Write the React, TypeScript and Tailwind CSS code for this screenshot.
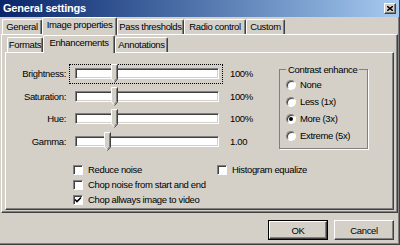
import { useState } from "react";

type SliderRow = {
  label: string;
  pos: number;
  text: string;
  focused?: boolean;
  height: string;
};

const sliders: SliderRow[] = [
  { label: "Brightness:", pos: 35, text: "100%", focused: true, height: "h-[23px]" },
  { label: "Saturation:", pos: 35, text: "100%", height: "h-[22px]" },
  { label: "Hue:", pos: 35, text: "100%", height: "h-[23px]" },
  { label: "Gamma:", pos: 28, text: "1.00", height: "h-[23px]" },
];

const outerTabs = [
  { name: "General", w: "w-[40px]" },
  { name: "Image properties", w: "w-[75px]", active: true },
  { name: "Pass thresholds", w: "w-[67px]" },
  { name: "Radio control", w: "w-[62px]" },
  { name: "Custom", w: "w-[39px]" },
];

const innerTabs = [
  { name: "Formats", w: "w-[36px]" },
  { name: "Enhancements", w: "w-[72px]", active: true },
  { name: "Annotations", w: "w-[53px]" },
];

const contrastModes = ["None", "Less (1x)", "More (3x)", "Extreme (5x)"];

const Tab = ({ name, w, active }: { name: string; w: string; active?: boolean }) => (
  <div
    className={
      active
        ? `${w} relative z-10 -mb-px h-[18px] bg-[#d4d0c8] border-t border-l border-r border-t-white border-l-white border-r-[#404040] shadow-[inset_-1px_0_#808080] rounded-t-[2px] flex items-start justify-center pt-[1px]`
        : `${w} h-[15px] border-t border-l border-r border-t-white border-l-white border-r-[#404040] shadow-[inset_-1px_0_#808080] rounded-t-[2px] flex items-start justify-center pt-[1px]`
    }
  >
    <span className="whitespace-nowrap">{name}</span>
  </div>
);

const Thumb = () => (
  <svg width="7" height="19" viewBox="0 0 7 19">
    <path d="M0.5 0.5H6.5V15L3.5 18.5L0.5 15Z" fill="#d4d0c8" />
    <path d="M0.5 15V0.5H6" stroke="#fff" fill="none" />
    <path d="M0.5 15L3 17.5" stroke="#fff" fill="none" />
    <path d="M6.5 0.5V15L3.5 18.5" stroke="#404040" fill="none" />
    <path d="M5.5 1.5V14.6L3.5 17" stroke="#808080" fill="none" />
  </svg>
);

const Slider = ({ row }: { row: SliderRow }) => (
  <div className={`${row.height} flex items-center`}>
    <div className="w-[60px] text-right whitespace-nowrap">{row.label}</div>
    <div
      className={
        row.focused
          ? "ml-[3px] w-[154px] h-[20px] border border-dotted border-black flex items-center pl-[5px]"
          : "ml-[3px] w-[154px] h-[20px] border border-transparent flex items-center pl-[5px]"
      }
    >
      <div className="relative w-[144px] h-[11px] bg-white border border-t-[#808080] border-l-[#808080] border-r-white border-b-white shadow-[inset_1px_1px_#404040,inset_-1px_-1px_#d4d0c8]">
        <div className="absolute top-[-5px] leading-none" style={{ left: row.pos }}>
          <Thumb />
        </div>
      </div>
    </div>
    <div className="ml-[7px]">{row.text}</div>
  </div>
);

const Radio = ({ label, checked, onClick }: { label: string; checked: boolean; onClick: () => void }) => (
  <div className="h-[17px] flex items-center cursor-default" onClick={onClick}>
    <div className="w-[10px] h-[10px] rounded-full bg-white border border-t-[#808080] border-l-[#808080] border-b-white border-r-white shadow-[inset_1px_1px_#404040] flex items-center justify-center">
      {checked && <div className="w-[4px] h-[4px] rounded-full bg-black" />}
    </div>
    <span className="ml-[4px] whitespace-nowrap">{label}</span>
  </div>
);

const Checkbox = ({ label, checked, onClick }: { label: string; checked: boolean; onClick: () => void }) => (
  <div className="flex items-center cursor-default" onClick={onClick}>
    <div className="w-[10px] h-[10px] bg-white border border-t-[#808080] border-l-[#808080] border-b-white border-r-white shadow-[inset_1px_1px_#404040] flex items-center justify-center">
      {checked && (
        <svg width="8" height="8" viewBox="0 0 8 8">
          <path d="M1 3.5L3 5.5L7 1.5" stroke="#000" strokeWidth="1.6" fill="none" />
        </svg>
      )}
    </div>
    <span className="ml-[5px] whitespace-nowrap">{label}</span>
  </div>
);

export default function App() {
  const [contrast, setContrast] = useState(2);
  const [checks, setChecks] = useState({ noise: false, chop: false, video: true, histogram: false });

  const toggle = (key: keyof typeof checks) => setChecks({ ...checks, [key]: !checks[key] });

  return (
    <div className="w-[400px] h-[245px] bg-[#d4d0c8] border-r border-b border-[#404040] shadow-[inset_-1px_-1px_#808080] flex flex-col overflow-hidden text-[9.5px] leading-[11px] tracking-[-0.35px] text-black font-['Liberation_Sans',Arial,sans-serif]">
      {/* title bar */}
      <div className="h-[17px] shrink-0 bg-gradient-to-r from-[#0a246a] to-[#a6caf0] flex items-center pl-[3px] pr-[3px]">
        <span className="text-white font-bold text-[11px] tracking-[-0.2px]">General settings</span>
        <div className="ml-auto w-[12px] h-[11px] bg-[#d4d0c8] border border-t-white border-l-white border-r-[#404040] border-b-[#404040] shadow-[inset_-1px_-1px_#808080] flex items-center justify-center">
          <svg width="6" height="5" viewBox="0 0 6 5">
            <path d="M0 0L6 5M6 0L0 5" stroke="#000" strokeWidth="1.4" />
          </svg>
        </div>
      </div>

      {/* outer tabs */}
      <div className="h-[17px] shrink-0 flex items-end pl-[2px]">
        {outerTabs.map((t) => (
          <Tab key={t.name} {...t} />
        ))}
      </div>

      <div className="ml-[1px] w-[397px] h-[179px] shrink-0 border-t border-l border-r border-b border-t-white border-l-white border-r-[#404040] border-b-[#404040] shadow-[inset_-1px_-1px_#808080] flex flex-col">
        {/* inner tabs */}
        <div className="mt-[1px] ml-[3px] h-[16px] flex items-end pl-[2px]">
          {innerTabs.map((t) => (
            <Tab key={t.name} {...t} />
          ))}
        </div>

        <div className="ml-[3px] w-[389px] h-[158px] border-t border-l border-r border-b border-t-white border-l-white border-r-[#404040] border-b-[#404040] shadow-[inset_-1px_-1px_#808080] flex flex-col">
          <div className="flex mt-[9px]">
            <div className="w-[273px] flex flex-col">
              {sliders.map((row) => (
                <Slider key={row.label} row={row} />
              ))}
            </div>
            <fieldset className="mt-[2px] w-[89px] h-[85px] border border-[#808080] shadow-[1px_1px_0_#fff] pl-[6px] pt-[1px]">
              <legend className="px-[2px] whitespace-nowrap">Contrast enhance</legend>
              {contrastModes.map((m, i) => (
                <Radio key={m} label={m} checked={contrast === i} onClick={() => setContrast(i)} />
              ))}
            </fieldset>
          </div>

          <div className="mt-[9px] pl-[67px] flex flex-col">
            <div className="h-[15px] flex items-center">
              <div className="w-[144px]">
                <Checkbox label="Reduce noise" checked={checks.noise} onClick={() => toggle("noise")} />
              </div>
              <Checkbox label="Histogram equalize" checked={checks.histogram} onClick={() => toggle("histogram")} />
            </div>
            <div className="h-[15px] flex items-center">
              <Checkbox label="Chop noise from start and end" checked={checks.chop} onClick={() => toggle("chop")} />
            </div>
            <div className="h-[15px] flex items-center">
              <Checkbox label="Chop allways image to video" checked={checks.video} onClick={() => toggle("video")} />
            </div>
          </div>
        </div>
      </div>

      {/* buttons */}
      <div className="mt-[7px] flex justify-end gap-[6px] pr-[5px]">
        <button className="w-[60px] h-[20px] border border-black bg-[#d4d0c8]">
          <div className="w-full h-full border border-t-white border-l-white border-r-[#404040] border-b-[#404040] shadow-[inset_-1px_-1px_#808080] flex items-center justify-center">
            OK
          </div>
        </button>
        <button className="w-[60px] h-[20px] bg-[#d4d0c8] border border-t-white border-l-white border-r-[#404040] border-b-[#404040] shadow-[inset_-1px_-1px_#808080] flex items-center justify-center">
          Cancel
        </button>
      </div>
    </div>
  );
}
